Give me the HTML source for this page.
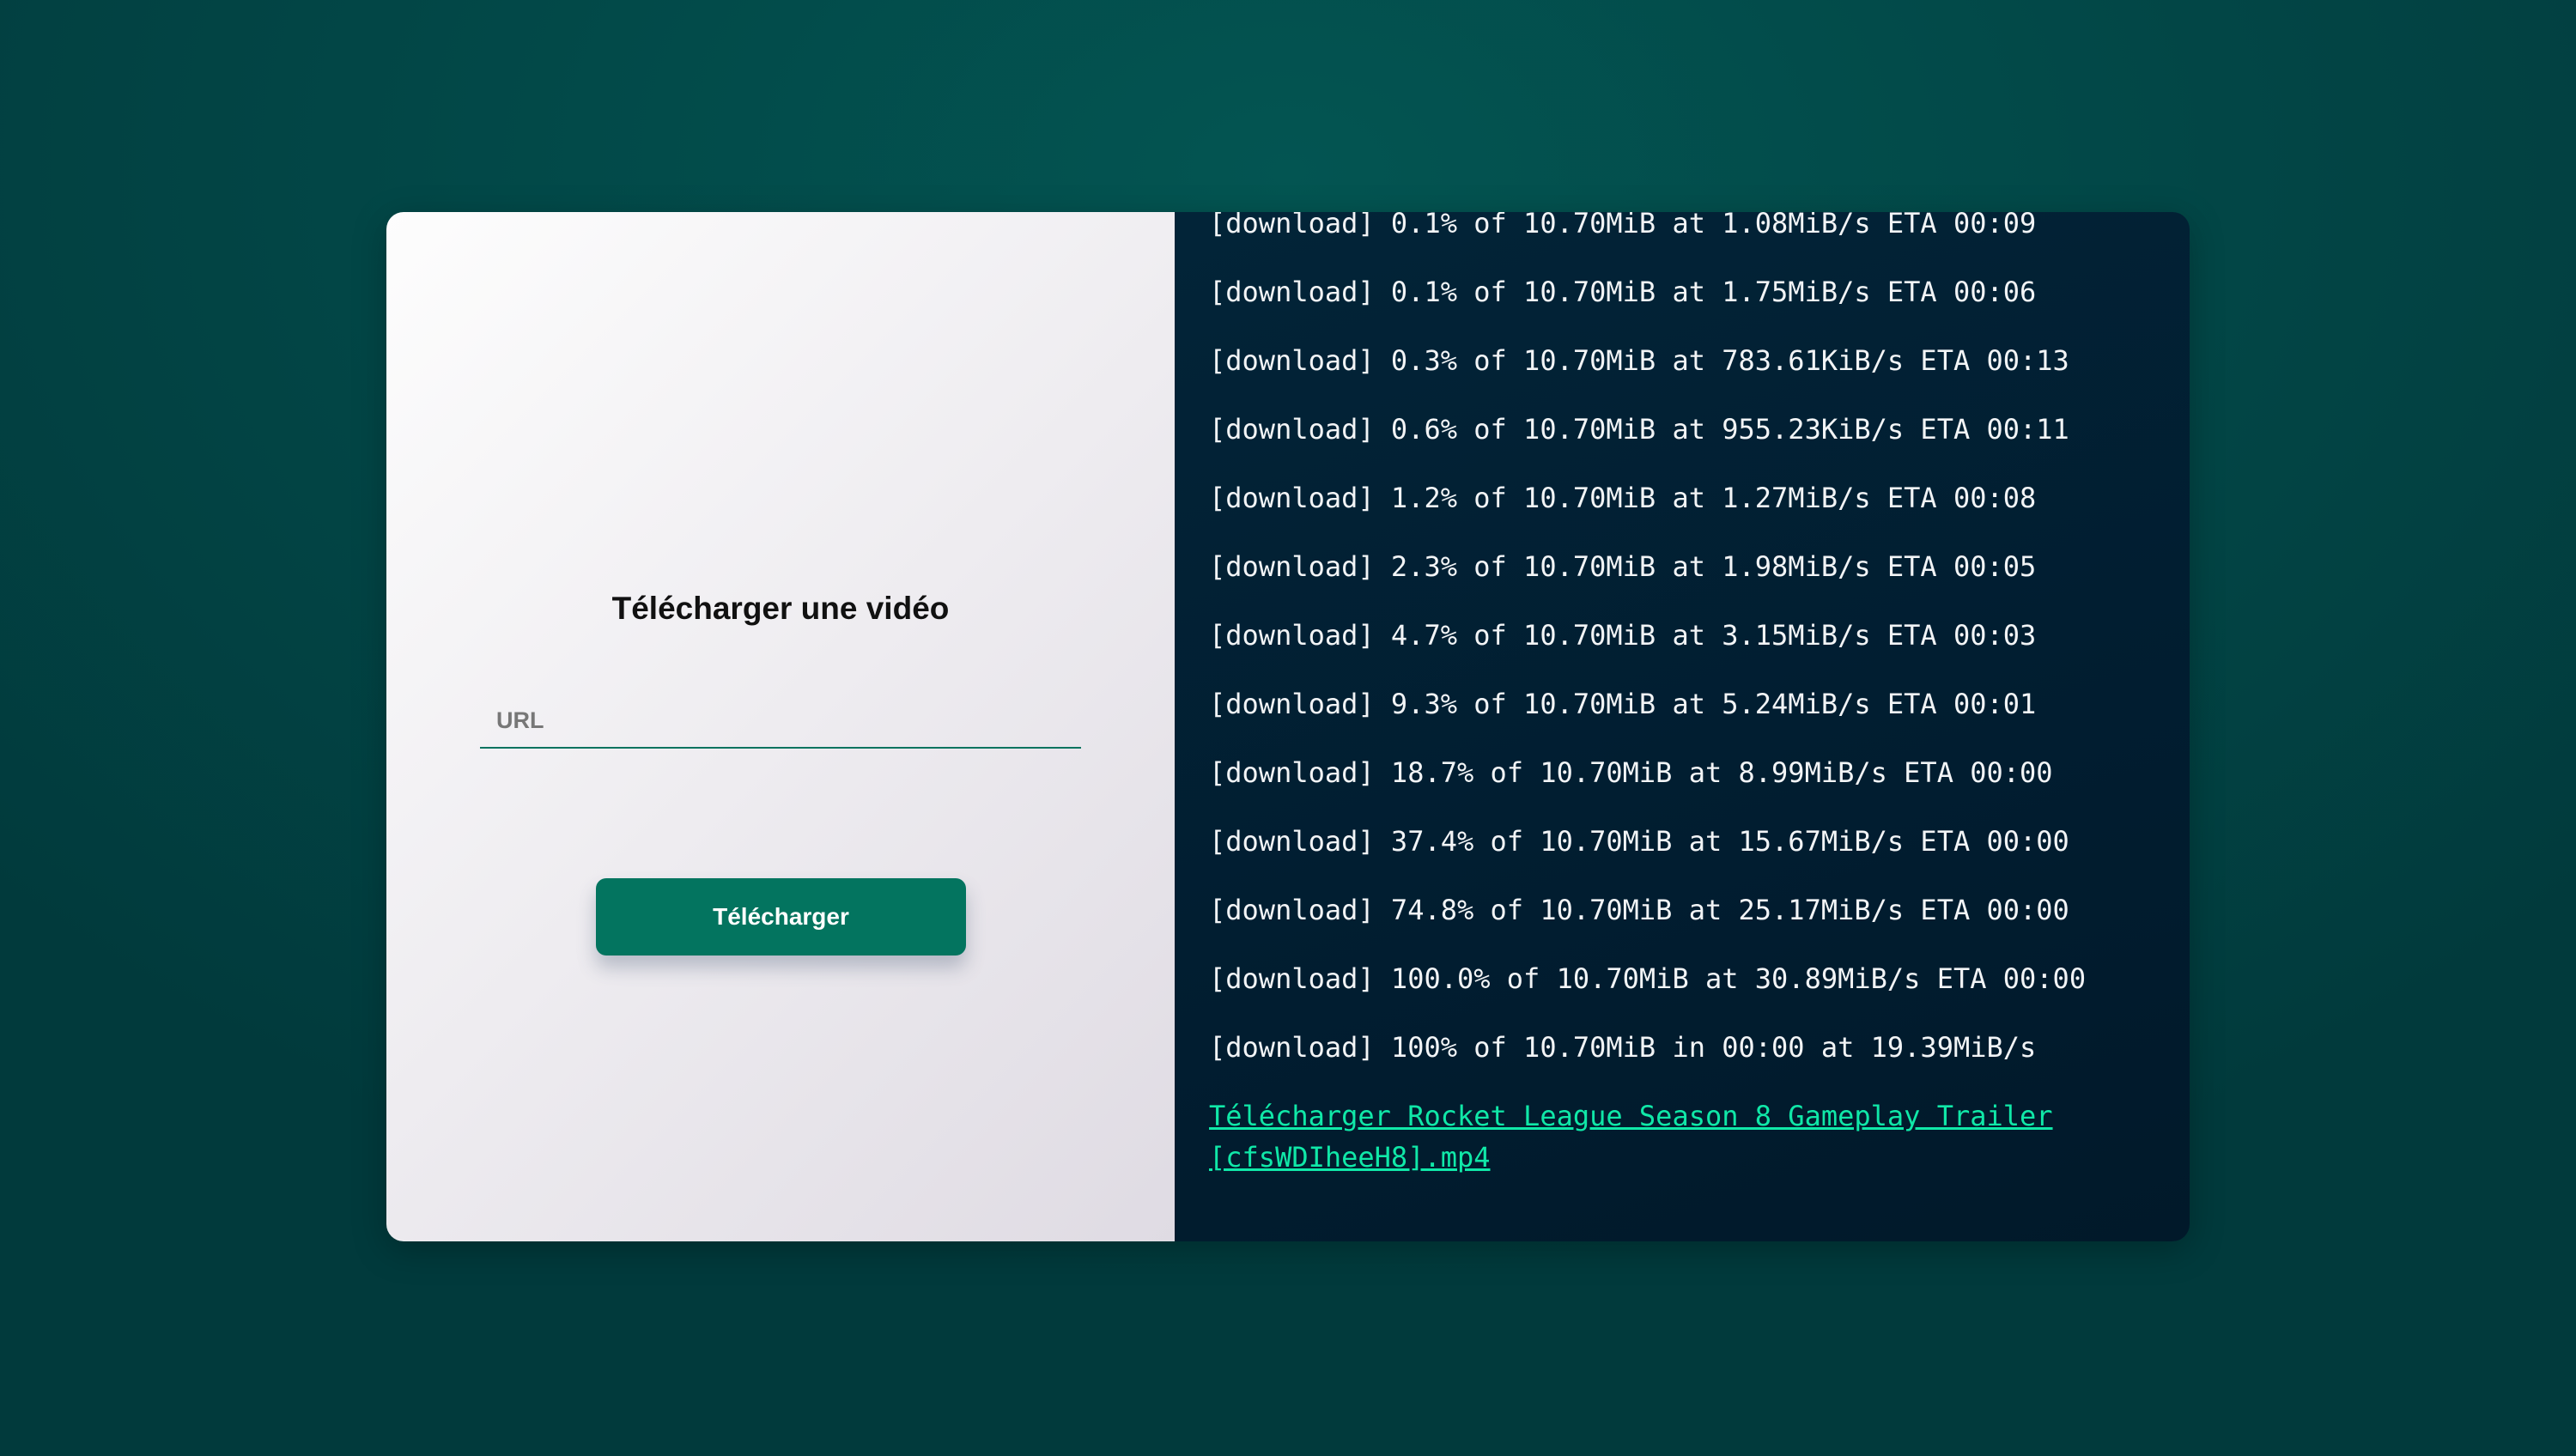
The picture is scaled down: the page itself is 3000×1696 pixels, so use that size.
<!DOCTYPE html>
<html><head><meta charset="utf-8"><style>
html,body{margin:0;padding:0}
body{width:3000px;height:1696px;overflow:hidden;position:relative;
background:radial-gradient(ellipse 2000px 1300px at 1500px 200px,#035552 0%,#024646 55%,#013a3c 100%);}
.card{position:absolute;left:450px;top:247px;width:2100px;height:1199px;border-radius:20px;overflow:hidden;display:flex;box-shadow:0 10px 40px rgba(0,0,0,0.25)}
.left{width:918px;height:100%;background:linear-gradient(135deg,#fdfdfd 0%,#eeecf0 50%,#dfdbe3 100%)}
.right{flex:1;height:100%;background:linear-gradient(160deg,#022438 0%,#011d30 60%,#01192a 100%);position:relative;font-family:"DejaVu Sans Mono","Liberation Mono",monospace;font-size:32px;color:#f2f4f6}
.log{position:absolute;left:40px;top:-11px}
.log p{margin:0 0 32px;line-height:48px;white-space:nowrap}
.log a{color:#10e8a8;text-decoration:underline;white-space:normal;display:block;width:1020px}
.f-url{position:absolute;left:559px;top:824px;width:700px;height:46px;border-bottom:2px solid #04735f;font-family:"Liberation Sans",Arial,sans-serif}
.f-url span{position:absolute;left:19px;top:0;font-size:27px;font-weight:bold;color:#777}
.f-btn{position:absolute;left:694px;top:1023px;width:431px;height:90px;background:#03745f;border-radius:12px;color:#fff;font-weight:bold;font-size:28px;text-align:center;line-height:90px;box-shadow:0 14px 22px rgba(60,80,110,0.3);font-family:"Liberation Sans",Arial,sans-serif}
.f-title{position:absolute;left:450px;width:918px;top:688px;text-align:center;font-weight:bold;font-size:37px;color:#111;font-family:"Liberation Sans",Arial,sans-serif}
</style></head><body>
<div class="card">
 <div class="left"></div>
 <div class="right">
  <div class="log">
   <p>[download] 0.1% of 10.70MiB at 1.08MiB/s ETA 00:09</p>
   <p>[download] 0.1% of 10.70MiB at 1.75MiB/s ETA 00:06</p>
   <p>[download] 0.3% of 10.70MiB at 783.61KiB/s ETA 00:13</p>
   <p>[download] 0.6% of 10.70MiB at 955.23KiB/s ETA 00:11</p>
   <p>[download] 1.2% of 10.70MiB at 1.27MiB/s ETA 00:08</p>
   <p>[download] 2.3% of 10.70MiB at 1.98MiB/s ETA 00:05</p>
   <p>[download] 4.7% of 10.70MiB at 3.15MiB/s ETA 00:03</p>
   <p>[download] 9.3% of 10.70MiB at 5.24MiB/s ETA 00:01</p>
   <p>[download] 18.7% of 10.70MiB at 8.99MiB/s ETA 00:00</p>
   <p>[download] 37.4% of 10.70MiB at 15.67MiB/s ETA 00:00</p>
   <p>[download] 74.8% of 10.70MiB at 25.17MiB/s ETA 00:00</p>
   <p>[download] 100.0% of 10.70MiB at 30.89MiB/s ETA 00:00</p>
   <p>[download] 100% of 10.70MiB in 00:00 at 19.39MiB/s</p>
   <p><a>Télécharger Rocket League Season 8 Gameplay Trailer [cfsWDIheeH8].mp4</a></p>
  </div>
 </div>
</div>
<div class="f-title">Télécharger une vidéo</div>
<div class="f-url"><span>URL</span></div>
<div class="f-btn">Télécharger</div>
</body></html>
